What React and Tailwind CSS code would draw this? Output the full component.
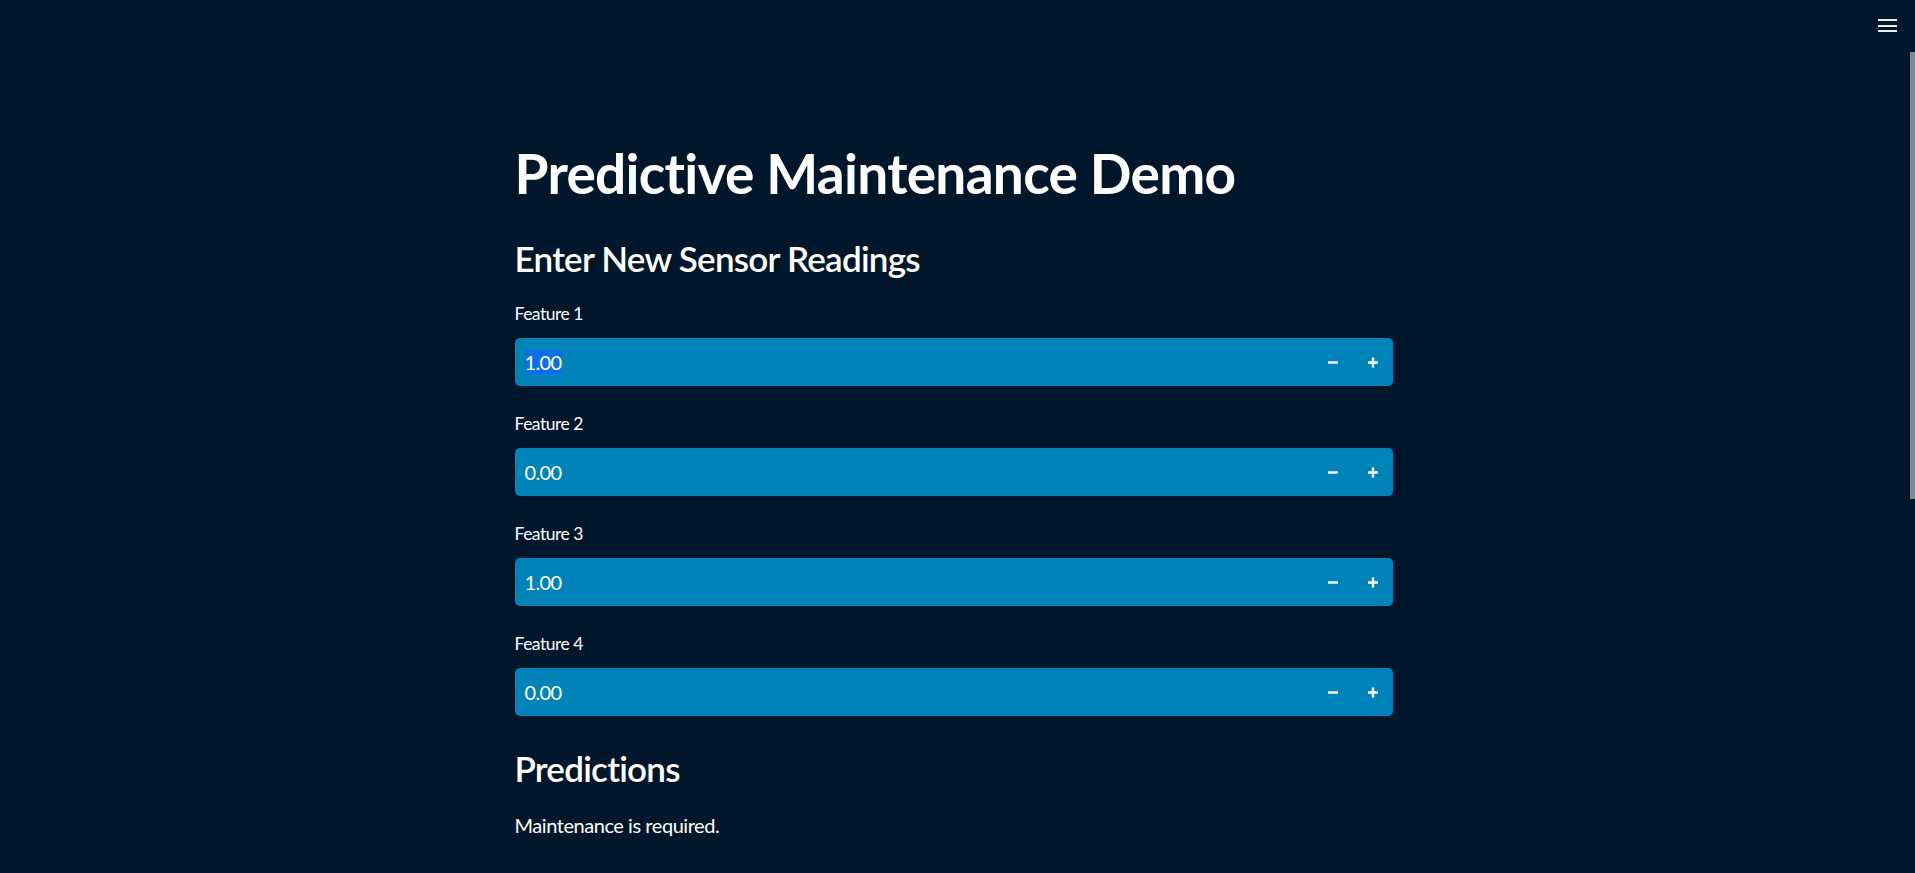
import React from "react";

const font = { fontFamily: '"Source Sans Pro", Lato, "Open Sans", sans-serif' };

function Minus() {
  return (
    <svg width="12" height="12" viewBox="0 0 12 12">
      <path d="M1 6.5h10" stroke="white" strokeWidth="2.4" strokeLinecap="butt" />
    </svg>
  );
}

function Plus() {
  return (
    <svg width="12" height="12" viewBox="0 0 12 12">
      <path d="M1 6.5h10M6 1.5v10" stroke="white" strokeWidth="2.4" strokeLinecap="butt" />
    </svg>
  );
}

function NumberField({ label, value, selected, first }) {
  return (
    <div className={first ? "mt-[22px]" : "mt-[25px]"}>
      <div className="h-[25px] leading-[25px] text-[17.5px] tracking-[-0.5px] text-white">{label}</div>
      <div className="mt-[12px] h-[48px] rounded-[5px] bg-[#0083B8] flex items-center">
        <div className="flex-1 pl-[10px] text-[20px] tracking-[-0.6px] text-white leading-[25px]">
          {selected ? (
            <span className="bg-[#0b70e8] inline-block h-[25px] leading-[25px]">{value}</span>
          ) : (
            <span>{value}</span>
          )}
        </div>
        <div className="w-[40px] h-full flex items-center justify-center">
          <Minus />
        </div>
        <div className="w-[40px] h-full flex items-center justify-center">
          <Plus />
        </div>
      </div>
    </div>
  );
}

export default function App() {
  return (
    <div className="relative w-full h-[873px] overflow-hidden bg-[#00172B] text-white" style={font}>
      <div className="absolute right-[18px] top-[19px] flex flex-col gap-[3.5px]">
        <div className="w-[19px] h-[2px] bg-[#e8eaed]" />
        <div className="w-[19px] h-[2px] bg-[#e8eaed]" />
        <div className="w-[19px] h-[2px] bg-[#e8eaed]" />
      </div>
      <div className="absolute right-0 top-[52px] w-[5px] h-[447px] bg-[#7f8991]" />

      <div className="flex justify-center pr-[8px]">
        <div className="w-[878px] pt-[140px]">
          <h1 className="h-[66px] leading-[66px] text-[55px] font-bold tracking-[-0.72px] whitespace-nowrap">
            Predictive Maintenance Demo
          </h1>
          <h2 className="mt-[31px] h-[42px] leading-[42px] text-[35px] font-semibold tracking-[-0.75px] whitespace-nowrap">
            Enter New Sensor Readings
          </h2>
          <NumberField label="Feature 1" value="1.00" selected first />
          <NumberField label="Feature 2" value="0.00" />
          <NumberField label="Feature 3" value="1.00" />
          <NumberField label="Feature 4" value="0.00" />
          <h2 className="mt-[31px] h-[42px] leading-[42px] text-[35px] font-semibold tracking-[-0.75px]">
            Predictions
          </h2>
          <p className="mt-[24px] h-[25px] leading-[25px] text-[20px] tracking-[-0.45px]">Maintenance is required.</p>
        </div>
      </div>
    </div>
  );
}
